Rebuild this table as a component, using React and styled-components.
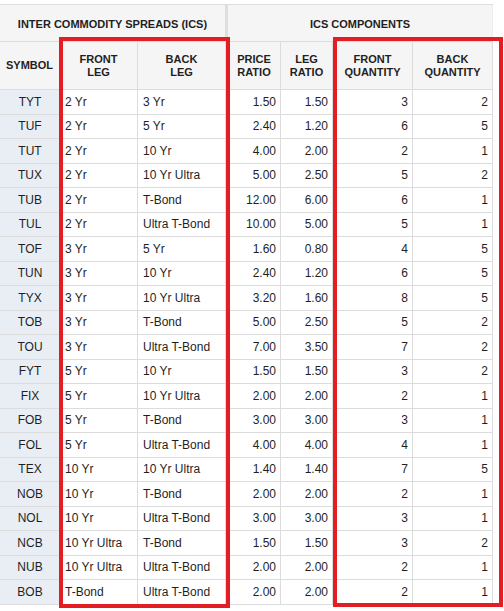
import React from 'react';
import styled, { createGlobalStyle } from 'styled-components';

const GlobalStyle = createGlobalStyle`
  body {
    margin: 0;
    background: #ffffff;
    font-family: 'Liberation Sans', Arial, sans-serif;
  }
`;

// 스프레드 데이터
const rows = [
  ['TYT', '2 Yr', '3 Yr', '1.50', '1.50', 3, 2],
  ['TUF', '2 Yr', '5 Yr', '2.40', '1.20', 6, 5],
  ['TUT', '2 Yr', '10 Yr', '4.00', '2.00', 2, 1],
  ['TUX', '2 Yr', '10 Yr Ultra', '5.00', '2.50', 5, 2],
  ['TUB', '2 Yr', 'T-Bond', '12.00', '6.00', 6, 1],
  ['TUL', '2 Yr', 'Ultra T-Bond', '10.00', '5.00', 5, 1],
  ['TOF', '3 Yr', '5 Yr', '1.60', '0.80', 4, 5],
  ['TUN', '3 Yr', '10 Yr', '2.40', '1.20', 6, 5],
  ['TYX', '3 Yr', '10 Yr Ultra', '3.20', '1.60', 8, 5],
  ['TOB', '3 Yr', 'T-Bond', '5.00', '2.50', 5, 2],
  ['TOU', '3 Yr', 'Ultra T-Bond', '7.00', '3.50', 7, 2],
  ['FYT', '5 Yr', '10 Yr', '1.50', '1.50', 3, 2],
  ['FIX', '5 Yr', '10 Yr Ultra', '2.00', '2.00', 2, 1],
  ['FOB', '5 Yr', 'T-Bond', '3.00', '3.00', 3, 1],
  ['FOL', '5 Yr', 'Ultra T-Bond', '4.00', '4.00', 4, 1],
  ['TEX', '10 Yr', '10 Yr Ultra', '1.40', '1.40', 7, 5],
  ['NOB', '10 Yr', 'T-Bond', '2.00', '2.00', 2, 1],
  ['NOL', '10 Yr', 'Ultra T-Bond', '3.00', '3.00', 3, 1],
  ['NCB', '10 Yr Ultra', 'T-Bond', '1.50', '1.50', 3, 2],
  ['NUB', '10 Yr Ultra', 'Ultra T-Bond', '2.00', '2.00', 2, 1],
  ['BOB', 'T-Bond', 'Ultra T-Bond', '2.00', '2.00', 2, 1]
];

const App = () => {
  return (
    <>
      <GlobalStyle />
      <Page>
        <Table>
          <GroupRow>
            <GroupCell $split>INTER COMMODITY SPREADS (ICS)</GroupCell>
            <GroupCell>ICS COMPONENTS</GroupCell>
          </GroupRow>
          <HeaderRow>
            <HeadCell>SYMBOL</HeadCell>
            <HeadCell>FRONT<br />LEG</HeadCell>
            <HeadCell $split>BACK<br />LEG</HeadCell>
            <HeadCell>PRICE<br />RATIO</HeadCell>
            <HeadCell>LEG<br />RATIO</HeadCell>
            <HeadCell>FRONT<br />QUANTITY</HeadCell>
            <HeadCell>BACK<br />QUANTITY</HeadCell>
          </HeaderRow>
          {rows.map((r) => (
            <DataRow key={r[0]}>
              <SymbolCell>{r[0]}</SymbolCell>
              <Cell>{r[1]}</Cell>
              <Cell $split>{r[2]}</Cell>
              <Cell $num>{r[3]}</Cell>
              <Cell $num>{r[4]}</Cell>
              <Cell $num>{r[5]}</Cell>
              <Cell $num>{r[6]}</Cell>
            </DataRow>
          ))}
        </Table>
        <Highlight $left={59} $width={171} $height={571} />
        <Highlight $left={333} $width={170} $height={570} />
      </Page>
    </>
  );
};

const Page = styled.div`
  position: relative;
  width: 504px;
  height: 611px;
  padding-top: 4px;
  box-sizing: border-box;
  overflow: hidden;
`;
const Table = styled.div`
  width: 493px;
  border-top: 1px solid #dcdcdc;
  color: #1f1f1f;
`;
const GroupRow = styled.div`
  display: grid;
  grid-template-columns: 228px 265px;
  height: 37px;
`;
const GroupCell = styled.div`
  display: flex;
  align-items: center;
  justify-content: center;
  box-sizing: border-box;
  background: #f5f5f5;
  border-bottom: 1px solid #dcdcdc;
  border-right: ${(p) => (p.$split ? '3px solid #dedede' : '1px solid #eeeeee')};
  font-size: 11px;
  font-weight: bold;
  padding-top: 1px;
`;
const HeaderRow = styled.div`
  display: grid;
  grid-template-columns: 60px 78px 90px 53px 52px 80px 80px;
  height: 48px;
`;
const HeadCell = styled.div`
  display: flex;
  align-items: center;
  justify-content: center;
  text-align: center;
  box-sizing: border-box;
  background: #f5f5f5;
  border-bottom: 1px solid #dcdcdc;
  border-right: ${(p) => (p.$split ? '3px solid #dedede' : '1px solid #dcdcdc')};
  font-size: 11px;
  font-weight: bold;
  line-height: 13px;
`;
const DataRow = styled.div`
  display: grid;
  grid-template-columns: 60px 78px 90px 53px 52px 80px 80px;
  height: 24.5px;
`;
const Cell = styled.div`
  display: flex;
  align-items: center;
  justify-content: ${(p) => (p.$num ? 'flex-end' : 'flex-start')};
  box-sizing: border-box;
  padding: 0 4px 0 5px;
  background: #ffffff;
  border-bottom: 1px solid #dcdcdc;
  border-right: ${(p) => (p.$split ? '3px solid #dedede' : '1px solid #dcdcdc')};
  font-size: 12px;
  white-space: nowrap;
`;
const SymbolCell = styled(Cell)`
  justify-content: center;
  background: #e9eef5;
`;
const Highlight = styled.div`
  position: absolute;
  top: 37px;
  left: ${(p) => p.$left}px;
  width: ${(p) => p.$width}px;
  height: ${(p) => p.$height}px;
  box-sizing: border-box;
  border: 4px solid #e31d24;
  pointer-events: none;
`;

export default App;
